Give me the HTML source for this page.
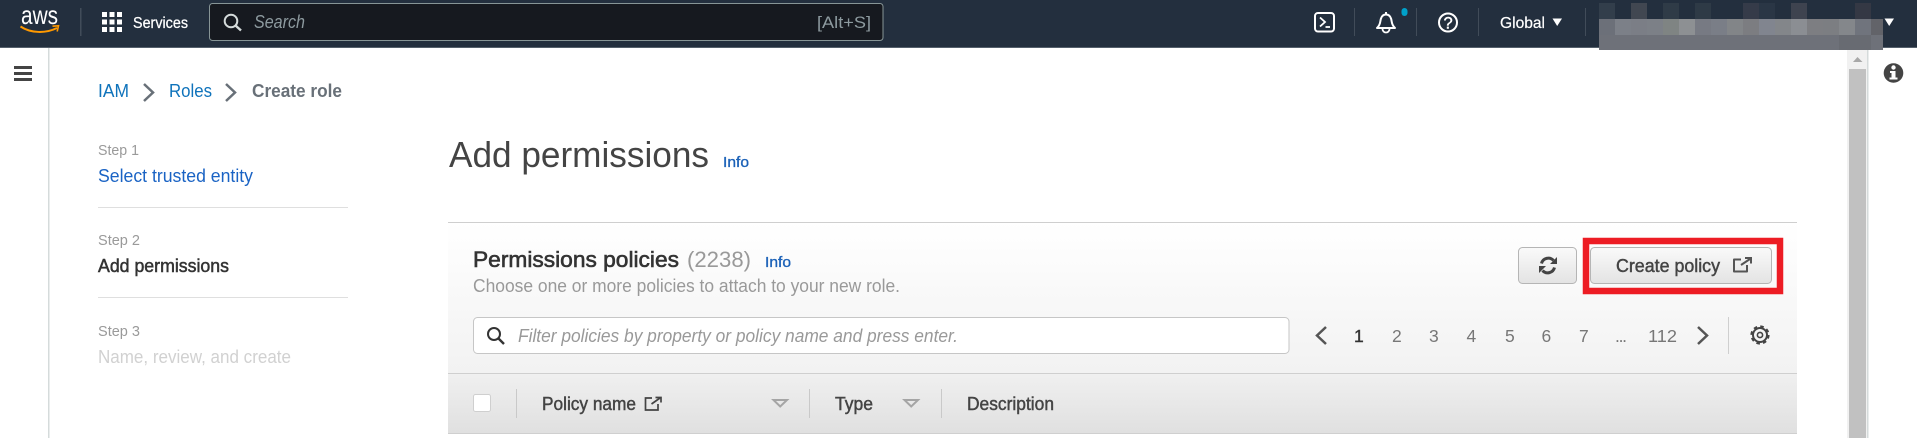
<!DOCTYPE html>
<html><head><meta charset="utf-8"><title>Add permissions</title>
<style>
html,body{margin:0;padding:0;width:1917px;height:438px;overflow:hidden;background:#fff}
svg{display:block}
text{font-family:"Liberation Sans",sans-serif;white-space:pre}
</style></head><body>
<svg width="1917" height="438" viewBox="0 0 1917 438" xmlns="http://www.w3.org/2000/svg">
<defs>
<linearGradient id="g1" x1="0" y1="0" x2="0" y2="1"><stop offset="0" stop-color="#fff"/><stop offset="1" stop-color="#f2f2f2"/></linearGradient>
<linearGradient id="g2" x1="0" y1="0" x2="0" y2="1"><stop offset="0" stop-color="#f0f0f0"/><stop offset="1" stop-color="#e0e0e0"/></linearGradient>
<linearGradient id="g3" x1="0" y1="0" x2="0" y2="1"><stop offset="0" stop-color="#fafafa"/><stop offset="1" stop-color="#e3e3e3"/></linearGradient>
</defs>
<rect width="1917" height="438" fill="#fff"/>
<!-- header -->
<rect width="1917" height="47" fill="#232f3e"/>
<rect y="47" width="1917" height="1" fill="#55606c"/>
<text x="21" y="24" font-size="26" fill="#fff" textLength="37" lengthAdjust="spacingAndGlyphs">aws</text>
<path d="M20.5 26.5C31 33.5 46 33.5 57 28" fill="none" stroke="#f90" stroke-width="2"/>
<path d="M52.5 26.2L58.5 25.8L57.2 31.5" fill="none" stroke="#f90" stroke-width="1.6"/>
<rect x="80" y="8" width="1.5" height="28" fill="#414c59"/>
<g fill="#fff">
<rect x="102" y="12" width="5" height="5"/><rect x="109.5" y="12" width="5" height="5"/><rect x="117" y="12" width="5" height="5"/>
<rect x="102" y="19.5" width="5" height="5"/><rect x="109.5" y="19.5" width="5" height="5"/><rect x="117" y="19.5" width="5" height="5"/>
<rect x="102" y="27" width="5" height="5"/><rect x="109.5" y="27" width="5" height="5"/><rect x="117" y="27" width="5" height="5"/>
</g>
<text x="133" y="28" font-size="15.5" fill="#fff" stroke="#fff" stroke-width=".25" textLength="55" lengthAdjust="spacingAndGlyphs">Services</text>
<rect x="209.5" y="3.5" width="673.5" height="37" rx="3" fill="#16191f" stroke="#879596"/>
<circle cx="231" cy="21" r="6.3" fill="none" stroke="#d5dbdb" stroke-width="2"/>
<path d="M235.5 25.5L241 30.5" stroke="#d5dbdb" stroke-width="2.4"/>
<text x="254" y="28" font-size="18" font-style="italic" fill="#8d9a9f" textLength="51" lengthAdjust="spacingAndGlyphs">Search</text>
<text x="817" y="28" font-size="17" fill="#8d9a9f" textLength="54" lengthAdjust="spacingAndGlyphs">[Alt+S]</text>
<!-- header right -->
<rect x="1315" y="13" width="19" height="18.5" rx="3" fill="none" stroke="#fff" stroke-width="2"/>
<path d="M1320 17.5L1325 22L1320 26.5" fill="none" stroke="#fff" stroke-width="1.8"/><path d="M1325.5 27H1330" stroke="#fff" stroke-width="1.8"/>
<rect x="1354" y="8" width="1" height="28" fill="#414c59"/>
<path d="M1377 28C1381 24.5 1380 20.5 1381 18.5C1382 15.5 1384 14.5 1386 14.5C1388 14.5 1390 15.5 1391 18.5C1392 20.5 1391 24.5 1395 28Z" fill="none" stroke="#fff" stroke-width="2" stroke-linejoin="round"/>
<path d="M1386 12V14.5" stroke="#fff" stroke-width="2"/>
<path d="M1382.5 29A3.5 3.5 0 0 0 1389.5 29" fill="none" stroke="#fff" stroke-width="1.8"/>
<rect x="1401.5" y="8" width="6" height="8" rx="3" fill="#00a1c9"/>
<rect x="1416" y="8" width="1" height="28" fill="#414c59"/>
<circle cx="1448" cy="22.5" r="9" fill="none" stroke="#fff" stroke-width="2"/>
<text x="1443.5" y="28.5" font-size="16.5" fill="#fff" stroke="#fff" stroke-width=".4">?</text>
<rect x="1478" y="8" width="1" height="28" fill="#414c59"/>
<text x="1500" y="28" font-size="16" fill="#fff" stroke="#fff" stroke-width=".2" textLength="45" lengthAdjust="spacingAndGlyphs">Global</text>
<path d="M1552.5 18.5H1562L1557.2 26Z" fill="#fff"/>
<rect x="1585" y="8" width="1" height="28" fill="#414c59"/>
<path d="M1884.5 18.5H1894L1889.2 26Z" fill="#fff"/>
<!-- scrollbar / right rail -->
<rect x="1847" y="48" width="21" height="390" fill="#f1f1f1"/>
<rect x="1849" y="69" width="17" height="369" fill="#c1c1c1"/>
<path d="M1853 62L1857.5 57L1862.5 62Z" fill="#a8a8a8"/>
<rect x="1867" y="48" width="1.5" height="390" fill="#d5dbdb"/>
<circle cx="1893.5" cy="73" r="9.8" fill="#444"/>
<circle cx="1893.5" cy="67.5" r="2.2" fill="#fff"/>
<path d="M1890 71H1895.5V77.5H1897.5V79.5H1889.5V77.5H1891.5V73H1890Z" fill="#fff"/>
<!-- redacted blur -->
<g>
<rect x="1599" y="3" width="16" height="16" fill="#323e4b"/>
<rect x="1631" y="3" width="16" height="16" fill="#414751"/>
<rect x="1663" y="3" width="16" height="16" fill="#2f3b47"/>
<rect x="1695" y="3" width="16" height="16" fill="#2e3a46"/>
<rect x="1743" y="3" width="16" height="16" fill="#353b49"/>
<rect x="1759" y="3" width="16" height="16" fill="#2a3645"/>
<rect x="1791" y="3" width="16" height="16" fill="#3e434f"/>
<rect x="1855" y="3" width="16" height="16" fill="#343844"/>
<rect x="1599" y="19" width="16" height="16" fill="#6c7079"/>
<rect x="1615" y="19" width="16" height="16" fill="#7c8088"/>
<rect x="1631" y="19" width="16" height="16" fill="#7b7e86"/>
<rect x="1647" y="19" width="16" height="16" fill="#7c8087"/>
<rect x="1663" y="19" width="16" height="16" fill="#7f8483"/>
<rect x="1679" y="19" width="16" height="16" fill="#8d9093"/>
<rect x="1695" y="19" width="16" height="16" fill="#777a83"/>
<rect x="1711" y="19" width="16" height="16" fill="#7a7e87"/>
<rect x="1727" y="19" width="16" height="16" fill="#828588"/>
<rect x="1743" y="19" width="16" height="16" fill="#7c7d81"/>
<rect x="1759" y="19" width="16" height="16" fill="#81858f"/>
<rect x="1775" y="19" width="16" height="16" fill="#83868a"/>
<rect x="1791" y="19" width="16" height="16" fill="#8b8e93"/>
<rect x="1807" y="19" width="16" height="16" fill="#7d7e82"/>
<rect x="1823" y="19" width="16" height="16" fill="#7c7e82"/>
<rect x="1839" y="19" width="16" height="16" fill="#84878b"/>
<rect x="1855" y="19" width="16" height="16" fill="#70747d"/>
<rect x="1871" y="19" width="12" height="16" fill="#626369"/>
<rect x="1599" y="35" width="284" height="15" fill="#6e7179"/>
<rect x="1839" y="35" width="32" height="15" fill="#686b72"/>
</g>
<!-- left rail -->
<rect x="14" y="66" width="18" height="3" fill="#444"/>
<rect x="14" y="72" width="18" height="3" fill="#444"/>
<rect x="14" y="78" width="18" height="3" fill="#444"/>
<rect x="48" y="48" width="1.5" height="390" fill="#d5dbdb"/>
<!-- breadcrumb -->
<text x="98" y="97" font-size="18" fill="#0f73bb" textLength="31" lengthAdjust="spacingAndGlyphs">IAM</text>
<path d="M144 84L153 92.5L144 101" fill="none" stroke="#687078" stroke-width="2.5"/>
<text x="169" y="97" font-size="18" fill="#0f73bb" textLength="43" lengthAdjust="spacingAndGlyphs">Roles</text>
<path d="M226 84L235 92.5L226 101" fill="none" stroke="#687078" stroke-width="2.5"/>
<text x="252" y="97" font-size="18" font-weight="bold" fill="#687078" textLength="90" lengthAdjust="spacingAndGlyphs">Create role</text>
<!-- steps -->
<text x="98" y="155" font-size="15" fill="#9a9a9a" textLength="41" lengthAdjust="spacingAndGlyphs">Step 1</text>
<text x="98" y="182" font-size="18" fill="#1a63c4" textLength="155" lengthAdjust="spacingAndGlyphs">Select trusted entity</text>
<rect x="98" y="207" width="250" height="1" fill="#dfdfdf"/>
<text x="98" y="245" font-size="15" fill="#9a9a9a" textLength="42" lengthAdjust="spacingAndGlyphs">Step 2</text>
<text x="98" y="272" font-size="18" fill="#333" stroke="#333" stroke-width=".5" textLength="131" lengthAdjust="spacingAndGlyphs">Add permissions</text>
<rect x="98" y="297" width="250" height="1" fill="#dfdfdf"/>
<text x="98" y="336" font-size="15" fill="#9a9a9a" textLength="42" lengthAdjust="spacingAndGlyphs">Step 3</text>
<text x="98" y="363" font-size="18" fill="#d1d1d1" textLength="193" lengthAdjust="spacingAndGlyphs">Name, review, and create</text>
<!-- heading -->
<text x="449" y="167" font-size="36" fill="#444" textLength="260" lengthAdjust="spacingAndGlyphs">Add permissions</text>
<text x="723" y="167" font-size="15" fill="#1c62b8" stroke="#1c62b8" stroke-width=".35" textLength="26" lengthAdjust="spacingAndGlyphs">Info</text>
<!-- panel -->
<rect x="448" y="222" width="1349" height="151" fill="url(#g1)"/>
<rect x="448" y="373" width="1349" height="60" fill="url(#g2)"/>
<rect x="448" y="222" width="1349" height="1" fill="#cfcfcf"/>
<rect x="448" y="373" width="1349" height="1" fill="#cfcfcf"/>
<rect x="448" y="433" width="1349" height="1" fill="#cfcfcf"/>
<text x="473" y="267" font-size="22" fill="#333" stroke="#333" stroke-width=".6" textLength="206" lengthAdjust="spacingAndGlyphs">Permissions policies</text>
<text x="687" y="267" font-size="22" fill="#999" textLength="64" lengthAdjust="spacingAndGlyphs">(2238)</text>
<text x="765" y="267" font-size="15" fill="#1c62b8" stroke="#1c62b8" stroke-width=".35" textLength="26" lengthAdjust="spacingAndGlyphs">Info</text>
<text x="473" y="292" font-size="18" fill="#999" textLength="427" lengthAdjust="spacingAndGlyphs">Choose one or more policies to attach to your new role.</text>
<!-- buttons -->
<rect x="1518.5" y="247.5" width="58" height="36" rx="4" fill="url(#g3)" stroke="#b5b5b5"/>
<path d="M1541.5 263.5A7 7 0 0 1 1553.5 260.5M1554.5 267.5A7 7 0 0 1 1542.5 270.5" fill="none" stroke="#444" stroke-width="3"/>
<path d="M1557 257V264H1550Z M1539 273V266H1546Z" fill="#444"/>
<rect x="1590.5" y="247.5" width="181" height="36" rx="4" fill="url(#g3)" stroke="#b5b5b5"/>
<text x="1616" y="272" font-size="18" fill="#444" stroke="#444" stroke-width=".45" textLength="104" lengthAdjust="spacingAndGlyphs">Create policy</text>
<path d="M1741 259.5H1734V271.5H1747V265" fill="none" stroke="#555" stroke-width="2" stroke-linejoin="round"/>
<path d="M1741 265L1750 259" stroke="#555" stroke-width="2"/><path d="M1745 258H1751V263.5" fill="none" stroke="#555" stroke-width="2"/>
<rect x="1586" y="241" width="194" height="50" fill="none" stroke="#ed1c24" stroke-width="6.5"/>
<!-- filter -->
<rect x="473.5" y="317.5" width="815.5" height="36" rx="4" fill="#fff" stroke="#c6c6c6"/>
<circle cx="494" cy="334" r="6" fill="none" stroke="#333" stroke-width="2"/>
<path d="M498.5 338.5L504 344" stroke="#333" stroke-width="2.4"/>
<text x="518" y="342" font-size="18" font-style="italic" fill="#999" textLength="440" lengthAdjust="spacingAndGlyphs">Filter policies by property or policy name and press enter.</text>
<!-- pagination -->
<path d="M1326 327L1317 335.5L1326 344" fill="none" stroke="#555" stroke-width="2.5"/>
<text x="1354" y="342" font-size="17.5" fill="#333" stroke="#333" stroke-width=".4">1</text>
<g font-size="17.5" fill="#777">
<text x="1392" y="342" fill="#777">2</text>
<text x="1429" y="342" fill="#777">3</text>
<text x="1466.5" y="342" fill="#777">4</text>
<text x="1505" y="342" fill="#777">5</text>
<text x="1541.5" y="342" fill="#777">6</text>
<text x="1579" y="342" fill="#777">7</text>
<text x="1615" y="342" fill="#777" textLength="12">...</text>
<text x="1648" y="342" fill="#777" textLength="29" lengthAdjust="spacingAndGlyphs">112</text>
</g>
<path d="M1698 327L1707 335.5L1698 344" fill="none" stroke="#555" stroke-width="2.5"/>
<rect x="1728" y="317" width="1" height="37" fill="#cfcfcf"/>
<circle cx="1760" cy="335" r="7" fill="none" stroke="#444" stroke-width="2"/>
<circle cx="1760" cy="335" r="2.6" fill="none" stroke="#444" stroke-width="1.6"/>
<circle cx="1760" cy="335" r="8.6" fill="none" stroke="#444" stroke-width="2" stroke-dasharray="3.6 3.15"/>
<!-- table header -->
<rect x="473.5" y="394.5" width="17" height="17" rx="2" fill="#fff" stroke="#cfcfcf"/>
<rect x="516" y="389" width="1" height="29" fill="#c9c9c9"/>
<text x="542" y="410" font-size="18" fill="#444" stroke="#444" stroke-width=".45" textLength="94" lengthAdjust="spacingAndGlyphs">Policy name</text>
<path d="M652 398H645.5V410H658V404" fill="none" stroke="#444" stroke-width="1.7"/>
<path d="M651.5 404L660 398" stroke="#444" stroke-width="1.7"/><path d="M655.5 397.5H661V402.5" fill="none" stroke="#444" stroke-width="1.7"/>
<path d="M773.5 400H787L780.2 406.5Z" fill="none" stroke="#a5a5a5" stroke-width="2"/>
<rect x="809" y="389" width="1" height="29" fill="#c9c9c9"/>
<text x="835" y="410" font-size="18" fill="#444" stroke="#444" stroke-width=".45" textLength="38" lengthAdjust="spacingAndGlyphs">Type</text>
<path d="M904.5 400H918L911.2 406.5Z" fill="none" stroke="#a5a5a5" stroke-width="2"/>
<rect x="941" y="389" width="1" height="29" fill="#c9c9c9"/>
<text x="967" y="410" font-size="18" fill="#444" stroke="#444" stroke-width=".45" textLength="87" lengthAdjust="spacingAndGlyphs">Description</text>
</svg>
</body></html>
